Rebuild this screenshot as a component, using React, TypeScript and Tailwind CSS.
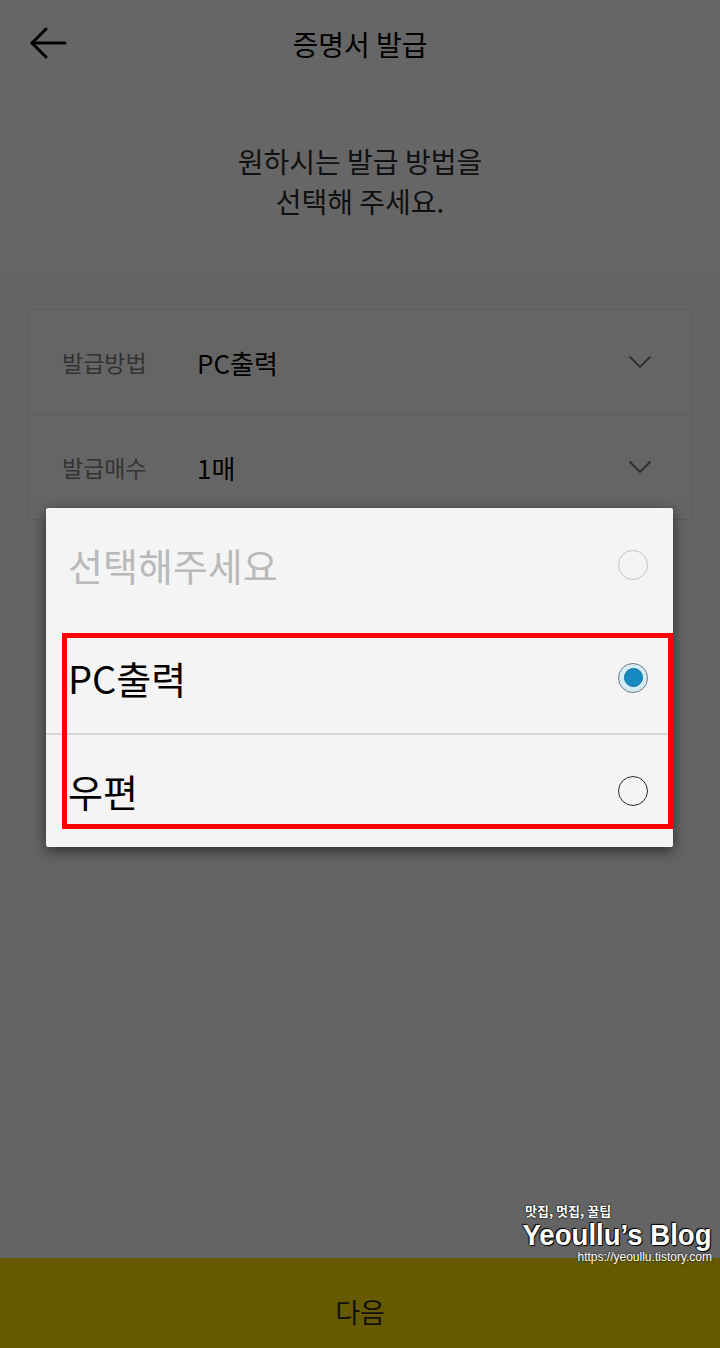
import { useState } from "react";

const options = [
  { id: "none", label: "선택해주세요", placeholder: true },
  { id: "pc", label: "PC출력" },
  { id: "post", label: "우편" },
];

function Chevron() {
  return (
    <svg width="24" height="14" viewBox="0 0 24 14" fill="none" stroke="#2e2e2e" strokeWidth="1.8">
      <polyline points="1.5,1.5 12,12 22.5,1.5" />
    </svg>
  );
}

function Radio({ checked, light }: { checked: boolean; light?: boolean }) {
  if (checked) {
    return (
      <div className="w-[30px] h-[30px] rounded-full border border-[#6b7a82] bg-[#d4ecf5] flex items-center justify-center">
        <div className="w-[19px] h-[19px] rounded-full bg-[#1789c3] border border-[#0f6d9c]" />
      </div>
    );
  }
  return (
    <div
      className={`w-[30px] h-[30px] rounded-full border ${
        light ? "border-[#c4c4c4]" : "border-[#2a2a2a]"
      }`}
    />
  );
}

export default function App() {
  const [selected, setSelected] = useState("pc");

  return (
    <div
      className="relative w-[720px] h-[1348px] flex flex-col bg-[#646464] overflow-hidden"
      style={{ fontFamily: '"Noto Sans CJK KR", "Noto Sans", sans-serif' }}
    >
      {/* Header */}
      <div className="bg-[#666666]">
        <div className="relative h-[88px] flex items-center justify-center">
          <button className="absolute left-[28px] top-[26px] w-[40px] h-[34px] flex items-center justify-center">
            <svg width="38" height="32" viewBox="0 0 38 32" fill="none" stroke="#000" strokeWidth="3" strokeLinecap="round" strokeLinejoin="round">
              <line x1="3" y1="16" x2="36" y2="16" />
              <polyline points="17,2 3,16 17,30" />
            </svg>
          </button>
          <h1 className="text-[28px] text-black leading-none">증명서 발급</h1>
        </div>
        <div className="h-[185px] flex flex-col items-center pt-[53px] text-[28px] leading-[40px] text-[#111]">
          <p>원하시는 발급 방법을</p>
          <p>선택해 주세요.</p>
        </div>
      </div>

      {/* Form */}
      <div className="flex-1 px-[28px] pt-[36px]">
        <div className="border border-[#5c5c5c] bg-[#656565]">
          <div className="h-[105px] flex items-center pl-[33px] pr-[39px] border-b border-[#5c5c5c]">
            <span className="w-[135px] text-[23px] text-[#333]">발급방법</span>
            <span className="flex-1 text-[26px] text-black">PC출력</span>
            <Chevron />
          </div>
          <div className="h-[104px] flex items-center pl-[33px] pr-[39px]">
            <span className="w-[135px] text-[23px] text-[#333]">발급매수</span>
            <span className="flex-1 text-[26px] text-black">1매</span>
            <Chevron />
          </div>
        </div>
      </div>

      {/* Bottom button */}
      <button className="h-[90px] w-full bg-[#665a00] flex items-center justify-center pt-[18px] text-[27px] text-[#111]">
        다음
      </button>

      {/* Watermark */}
      <div className="absolute right-[8px] top-[1203px] w-[190px] flex flex-col items-end text-white whitespace-nowrap">
        <span
          className="self-start pl-[3px] text-[13px] leading-[16px] font-bold"
          style={{ textShadow: "0 0 2px #000, 0 0 1px #000" }}
        >
          맛집, 멋집, 꿀팁
        </span>
        <span
          className="text-[30px] leading-[32px] font-bold origin-right scale-x-[0.92]"
          style={{ fontFamily: '"Liberation Sans", sans-serif', textShadow: "0 0 2px #000, 1px 1px 1px #000, -1px -1px 1px #000" }}
        >
          Yeoullu’s Blog
        </span>
        <span
          className="text-[12px] leading-[12px]"
          style={{ fontFamily: '"Liberation Sans", sans-serif', textShadow: "0 0 2px #000" }}
        >
          https://yeoullu.tistory.com
        </span>
      </div>

      {/* Dialog */}
      <div className="absolute left-[46px] top-[508px] w-[627px] bg-[#f4f4f4] rounded-[2px] shadow-[0_4px_14px_rgba(0,0,0,0.55)]">
        {options.map((o, i) => (
          <div
            key={o.id}
            onClick={() => !o.placeholder && setSelected(o.id)}
            className={`flex items-center pl-[22px] pr-[25px] ${
              i === 0 ? "h-[114px]" : i === 1 ? "h-[113px] border-b-2 border-[#d8d8d8]" : "h-[112px]"
            }`}
          >
            <span
              className={`flex-1 text-[38px] leading-none ${
                o.placeholder ? "text-[#b9b9b9]" : "text-black"
              }`}
            >
              {o.label}
            </span>
            <Radio checked={selected === o.id} light={o.placeholder} />
          </div>
        ))}
        {/* highlight annotation */}
        <div className="absolute left-[16px] top-[125px] w-[611px] h-[196px] border-[5px] border-[#ff0000] pointer-events-none" />
      </div>
    </div>
  );
}
